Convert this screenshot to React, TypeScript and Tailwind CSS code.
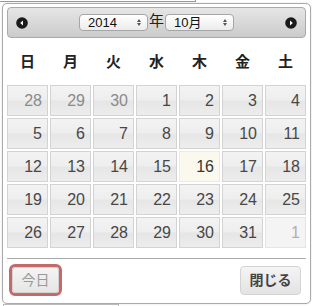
import React from "react";

const FONT = { fontFamily: '"Liberation Sans", "Noto Sans CJK JP", sans-serif' };

const weekdays = ["日", "月", "火", "水", "木", "金", "土"];

type Day = { n: number; other?: boolean; today?: boolean; dim?: boolean };

const days: Day[] = [
  { n: 28, other: true },
  { n: 29, other: true },
  { n: 30, other: true },
  ...Array.from({ length: 31 }, (_, i) => ({ n: i + 1, today: i + 1 === 16 })),
  { n: 1, other: true, dim: true },
];

function Arrow({ dir }: { dir: "w" | "e" }) {
  return (
    <svg width="12" height="12" viewBox="0 0 12 12">
      <circle cx="6" cy="6" r="5.8" fill="#1a1a1a" />
      {dir === "w" ? (
        <path d="M7 3.5 L4.2 6 L7 8.5 Z" fill="#fff" />
      ) : (
        <path d="M5 3.5 L7.8 6 L5 8.5 Z" fill="#fff" />
      )}
    </svg>
  );
}

function FakeSelect({ label }: { label: string }) {
  return (
    <div className="flex h-[17px] w-[69px] items-center justify-between rounded-[4px] border border-[#a6a6a6] bg-gradient-to-b from-[#ffffff] to-[#ececec] pl-[8px] pr-[6px] text-[13px] leading-none text-[#111]">
      <span>{label}</span>
      <span className="flex flex-col items-center gap-[1px]">
        <span className="h-0 w-0 border-x-[2.5px] border-b-[3px] border-x-transparent border-b-[#555]" />
        <span className="h-0 w-0 border-x-[2.5px] border-t-[3px] border-x-transparent border-t-[#555]" />
      </span>
    </div>
  );
}

export default function App() {
  return (
    <div className="h-[306px] w-[312px] overflow-hidden bg-white" style={FONT}>
      {/* edge of the page content above */}
      <div className="h-[3px] overflow-hidden">
        <div className="-mt-[2px] h-[4px] w-[196px] border-r border-b border-[#999]" />
      </div>

      {/* datepicker */}
      <div className="ml-[2px] w-[309px] rounded-[5px] border border-[#aaaaaa] bg-white px-[4px] pt-[3px] pb-[8px] shadow-[0_0_2px_rgba(0,0,0,0.15)]">
        {/* header */}
        <div className="flex h-[31px] items-center justify-between rounded-[4px] border border-[#aaaaaa] bg-gradient-to-b from-[#e6e6e6] to-[#cbcbcb] px-[8px]">
          <Arrow dir="w" />
          <div className="flex items-center gap-[1px]">
            <FakeSelect label="2014" />
            <span className="-mt-[2px] text-[15px] text-[#222]">年</span>
            <FakeSelect label="10月" />
          </div>
          <Arrow dir="e" />
        </div>

        {/* weekdays */}
        <div className="mt-[2px] grid h-[45px] grid-cols-7 items-center gap-x-[2px]">
          {weekdays.map((w) => (
            <div key={w} className="text-center text-[15px] font-bold text-[#222]">
              {w}
            </div>
          ))}
        </div>

        {/* days */}
        <div className="grid grid-cols-7 gap-x-[2px] gap-y-[2px]">
          {days.map((d, i) => (
            <div
              key={i}
              className={
                d.today
                  ? "flex h-[31px] items-center justify-end border border-[#fcefa1] bg-[#fbf9ee] pr-[5px] text-[16px] text-[#363636]"
                  : d.dim
                  ? "flex h-[31px] items-center justify-end border border-[#e4e4e4] bg-[#f4f4f4] pr-[5px] text-[16px] text-[#b0b0b0]"
                  : "flex h-[31px] items-center justify-end border border-[#d3d3d3] bg-[linear-gradient(#f3f3f3_0%,#eeeeee_48%,#e6e6e6_52%,#ededed_100%)] pr-[5px] text-[16px] " +
                    (d.other ? "text-[#8a8a8a]" : "text-[#474747]")
              }
            >
              {d.n}
            </div>
          ))}
        </div>

        {/* button pane */}
        <div className="mt-[10px] flex items-start justify-between border-t border-[#aaaaaa] px-[5px] pt-[7px]">
          <button className="mt-[1px] h-[26px] w-[47px] rounded-[3px] border border-[#d3d3d3] bg-gradient-to-b from-[#f4f4f4] to-[#e6e6e6] text-[14px] text-[#999] outline outline-[3px] outline-[#c46a6a]">
            今日
          </button>
          <button className="h-[29px] w-[61px] rounded-[4px] border border-[#d3d3d3] bg-gradient-to-b from-[#f4f4f4] to-[#e3e3e3] text-[14px] font-bold text-[#444]">
            閉じる
          </button>
        </div>
      </div>

      {/* element below */}
      <div className="ml-[3px] h-[10px] w-[116px] border-x border-t border-[#bbb]" />
    </div>
  );
}
